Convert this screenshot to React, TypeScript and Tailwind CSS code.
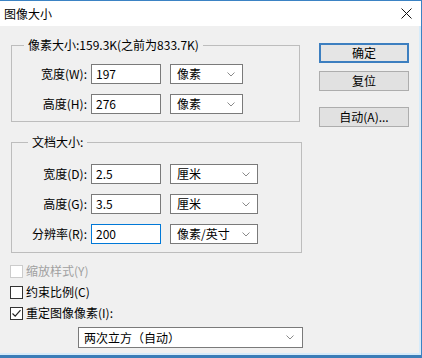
import React from 'react';

const font = { fontFamily: '"Noto Sans CJK SC", "Microsoft YaHei", sans-serif' };

const Chevron = () => (
  <svg width="8" height="5" viewBox="0 0 8 5" className="text-[#8a8a8a]">
    <path d="M0.5 0.5 L4 4 L7.5 0.5" fill="none" stroke="currentColor" strokeWidth="1" />
  </svg>
);

interface FieldRowProps {
  label: string;
  value: string;
  unit: string;
  selectWidth: string;
  focused?: boolean;
}

const FieldRow: React.FC<FieldRowProps> = ({ label, value, unit, selectWidth, focused = false }) => (
  <div className="flex items-center h-[20px]">
    <div className="w-[75px] text-right whitespace-nowrap">{label}</div>
    <div
      className={`ml-[4px] w-[70px] h-[20px] bg-white border flex items-center pl-[4px] ${
        focused ? 'border-[#0078d7]' : 'border-[#7a7a7a]'
      }`}
    >
      {value}
    </div>
    <div
      className={`ml-[9px] ${selectWidth} h-[20px] bg-white border border-[#7a7a7a] flex items-center justify-between pl-[6px] pr-[7px]`}
    >
      <span>{unit}</span>
      <Chevron />
    </div>
  </div>
);

const Checkbox = ({ checked = false, disabled = false }: { checked?: boolean; disabled?: boolean }) => (
  <div
    className={`w-[13px] h-[13px] border bg-white flex items-center justify-center ${
      disabled ? 'border-[#cccccc] bg-[#f0f0f0]' : 'border-[#333333]'
    }`}
  >
    {checked && (
      <svg width="11" height="11" viewBox="0 0 11 11">
        <path d="M1.5 5.5 L4.2 8.2 L9.5 2.2" fill="none" stroke="#222" strokeWidth="1.2" />
      </svg>
    )}
  </div>
);

export default function App() {
  return (
    <div
      className="w-[422px] h-[358px] bg-[#f0f0f0] text-[12px] leading-[16px] text-black flex flex-col border-t border-r border-[#3b83c4] overflow-hidden"
      style={font}
    >
      {/* Title bar */}
      <div className="h-[25px] bg-white flex items-center justify-between pl-[4px] pr-[9px] shrink-0">
        <span className="text-[12px]">图像大小</span>
        <svg width="11" height="11" viewBox="0 0 11 11">
          <path d="M0.5 0.5 L10.5 10.5 M10.5 0.5 L0.5 10.5" stroke="#111" strokeWidth="1" />
        </svg>
      </div>

      <div className="flex-1 flex border-r-2 border-[#d6ebfa]">
        {/* Left column */}
        <div className="w-[302px] pl-[11px] pt-[11px] flex flex-col">
          <fieldset className="w-[289px] border border-[#bdbdbd] px-0 pt-[11px] pb-[7px] flex flex-col gap-[10px]">
            <legend className="ml-[12px] px-[4px] leading-[16px]">像素大小:159.3K(之前为833.7K)</legend>
            <FieldRow label="宽度(W):" value="197" unit="像素" selectWidth="w-[73px]" />
            <FieldRow label="高度(H):" value="276" unit="像素" selectWidth="w-[73px]" />
          </fieldset>

          <fieldset className="mt-[12px] w-[291px] border border-[#bdbdbd] px-0 pt-[14px] pb-[8px] flex flex-col gap-[10px]">
            <legend className="ml-[16px] px-[4px] leading-[16px]">文档大小:</legend>
            <FieldRow label="宽度(D):" value="2.5" unit="厘米" selectWidth="w-[88px]" />
            <FieldRow label="高度(G):" value="3.5" unit="厘米" selectWidth="w-[88px]" />
            <FieldRow label="分辨率(R):" value="200" unit="像素/英寸" selectWidth="w-[88px]" focused />
          </fieldset>

          <div className="mt-[10px] -ml-[1px] flex flex-col gap-[5px]">
            <div className="flex items-center gap-[3px] text-[#a0a0a0]">
              <Checkbox disabled />
              <span>缩放样式(Y)</span>
            </div>
            <div className="flex items-center gap-[3px]">
              <Checkbox />
              <span>约束比例(C)</span>
            </div>
            <div className="flex items-center gap-[3px]">
              <Checkbox checked />
              <span>重定图像像素(I):</span>
            </div>
          </div>

          <div className="mt-[6px] ml-[67px] w-[225px] h-[21px] bg-white border border-[#7a7a7a] flex items-center justify-between pl-[5px] pr-[8px]">
            <span>两次立方（自动）</span>
            <Chevron />
          </div>
        </div>

        {/* Right column buttons */}
        <div className="pl-[17px] pt-[17px] flex flex-col">
          <div className="w-[90px] h-[20px] bg-[#e5e5e5] border-2 border-[#3d7fc0] flex items-center justify-center">
            确定
          </div>
          <div className="mt-[8px] w-[90px] h-[20px] bg-[#e1e1e1] border border-[#adadad] flex items-center justify-center">
            复位
          </div>
          <div className="mt-[16px] w-[90px] h-[20px] bg-[#e1e1e1] border border-[#adadad] flex items-center justify-center">
            自动(A)...
          </div>
        </div>
      </div>

      {/* Bottom window frame */}
      <div className="h-[2px] bg-[#d6ebfa] shrink-0" />
      <div className="h-[3px] bg-[#3b7db8] shrink-0" />
    </div>
  );
}
